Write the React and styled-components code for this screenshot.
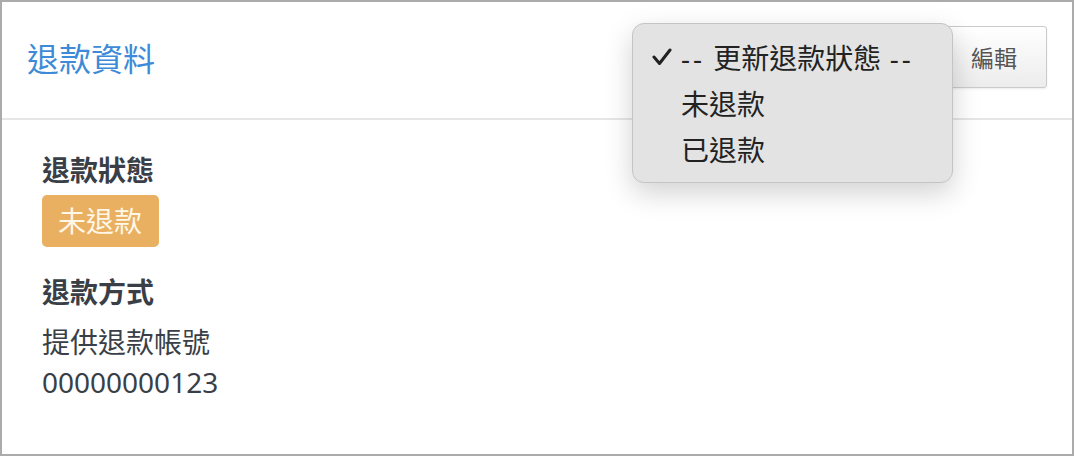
import React from 'react';
import styled, { createGlobalStyle } from 'styled-components';

const GlobalStyle = createGlobalStyle`
  html, body {
    margin: 0;
    padding: 0;
    background: #fff;
  }
  body {
    font-family: "Noto Sans", "Noto Sans CJK TC", sans-serif;
    color: #3a3f47;
  }
`;

const Frame = styled.div`
  box-sizing: border-box;
  width: 1074px;
  height: 456px;
  border: 2px solid #ababab;
  background: #fff;
`;

const Header = styled.header`
  position: relative;
  box-sizing: border-box;
  height: 118px;
  padding: 0 25px 0 25px;
  display: flex;
  align-items: center;
  justify-content: space-between;
  border-bottom: 2px solid #e6e6e6;
`;

const Title = styled.h2`
  margin: 0 0 2px;
  font-size: 32px;
  font-weight: 400;
  color: #3c8ad8;
  line-height: 40px;
`;

const EditButton = styled.button`
  box-sizing: border-box;
  width: 106px;
  height: 62px;
  margin-top: -6px;
  border: 1px solid #cbcbcb;
  border-radius: 3px;
  background: linear-gradient(#ffffff, #ececec);
  font-family: inherit;
  font-size: 23px;
  color: #555;
  box-shadow: 0 1px 2px rgba(0, 0, 0, 0.08);
`;

const Menu = styled.ul`
  position: absolute;
  left: 630px;
  top: 21px;
  box-sizing: border-box;
  width: 321px;
  margin: 0;
  padding: 10px 0 10px;
  list-style: none;
  background: #e3e3e3;
  border: 1px solid #c4c4c4;
  border-radius: 12px;
  box-shadow: 0 10px 28px rgba(0, 0, 0, 0.18);
  z-index: 2;
`;

const MenuItem = styled.li`
  display: flex;
  align-items: center;
  height: 46px;
  padding-left: 19px;
  font-size: 28px;
  color: #222;
  white-space: pre;
  word-spacing: 1px;
`;

const Dash = styled.span`
  letter-spacing: 3px;
`;

const Check = styled.span`
  display: inline-flex;
  width: 29px;
  visibility: ${(p) => (p.$on ? 'visible' : 'hidden')};
`;

const Body = styled.section`
  padding: 30px 40px 0;
`;

const Label = styled.h3`
  margin: 0;
  font-size: 28px;
  font-weight: 700;
  line-height: 40px;
  color: #3a3f47;
`;

const Badge = styled.span`
  display: inline-block;
  margin: 5px 0 25px;
  padding: 6px 17px 6px 16px;
  font-size: 28px;
  line-height: 40px;
  color: #fff7e8;
  background: #e8b060;
  border-radius: 5px;
`;

const Text = styled.p`
  margin: ${(p) => (p.$first ? '10px' : '0')} 0 0;
  font-size: 28px;
  line-height: 40px;
  color: #3a3f47;
`;

const options = [
  { label: '更新退款狀態', placeholder: true, selected: true },
  { label: '未退款' },
  { label: '已退款' },
];

const CheckIcon = () => (
  <svg width="20" height="18" viewBox="0 0 20 18">
    <polyline
      points="2,9 7.5,15.5 18,2"
      fill="none"
      stroke="#222"
      strokeWidth="3"
      strokeLinecap="round"
      strokeLinejoin="round"
    />
  </svg>
);

const App = () => (
  <Frame>
    <GlobalStyle />
    <Header>
      <Title>退款資料</Title>
      <EditButton>編輯</EditButton>
      <Menu>
        {options.map((opt) => (
          <MenuItem key={opt.label}>
            <Check $on={opt.selected}>
              <CheckIcon />
            </Check>
            {opt.placeholder ? (
              <span>
                <Dash>--</Dash> {opt.label} <Dash>--</Dash>
              </span>
            ) : (
              opt.label
            )}
          </MenuItem>
        ))}
      </Menu>
    </Header>
    <Body>
      <Label>退款狀態</Label>
      <Badge>未退款</Badge>
      <Label>退款方式</Label>
      <Text $first>提供退款帳號</Text>
      <Text>00000000123</Text>
    </Body>
  </Frame>
);

export default App;
